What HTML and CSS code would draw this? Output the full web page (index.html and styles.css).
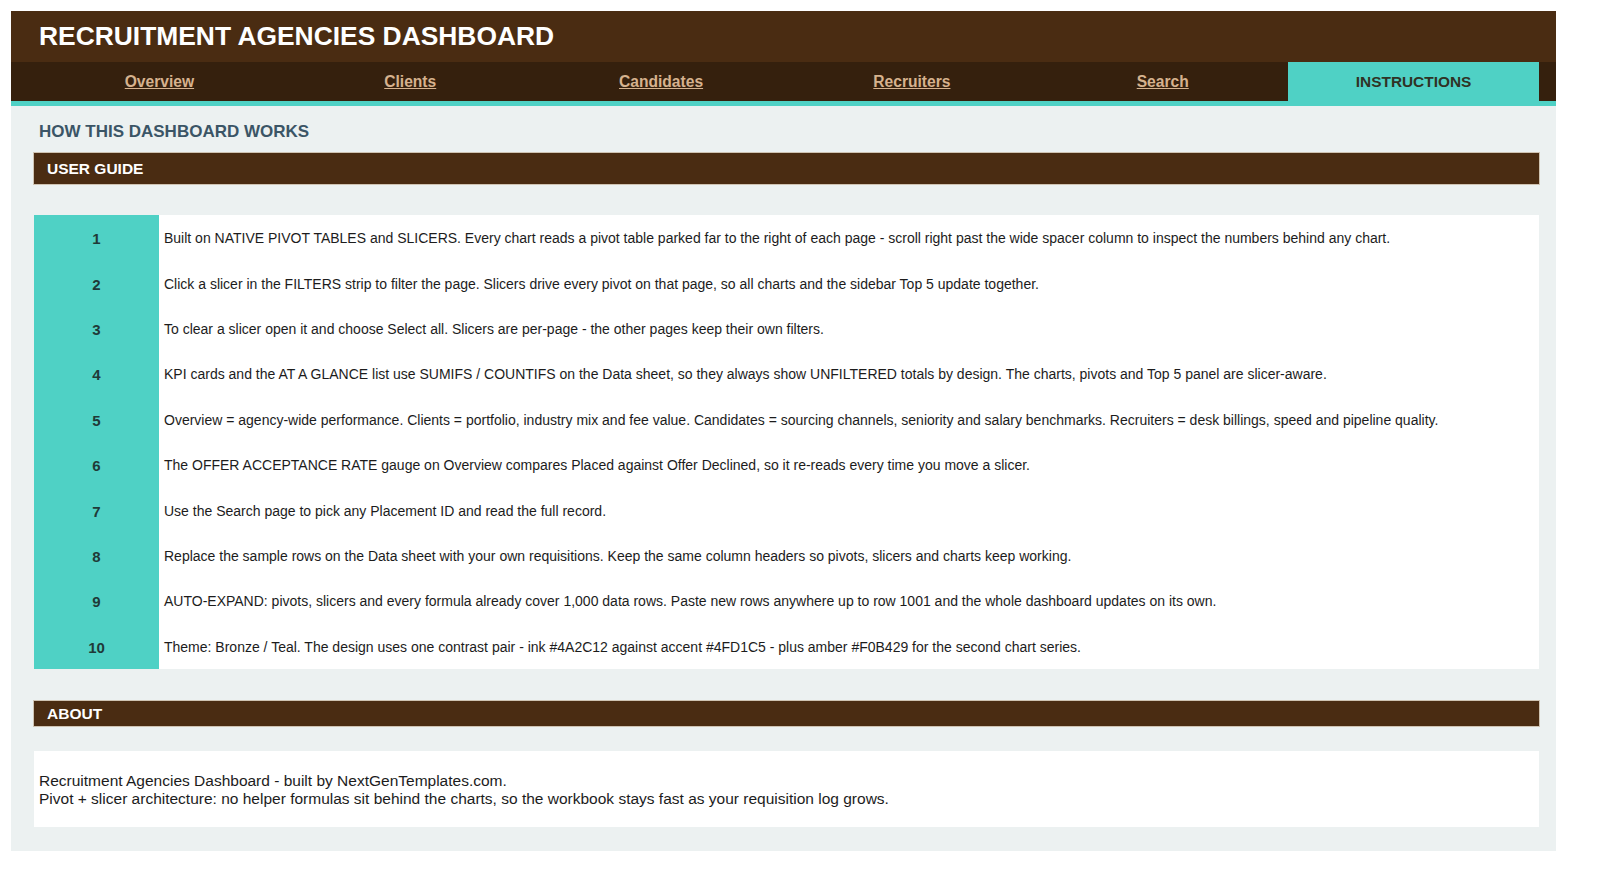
FILE: index.html
```html
<!DOCTYPE html>
<html>
<head>
<meta charset="utf-8">
<link rel="stylesheet" href="styles.css">
</head>
<body>
<div class="dash">
  <div class="title-bar">RECRUITMENT AGENCIES DASHBOARD</div>
  <div class="nav">
    <a class="tab">Overview</a>
    <a class="tab">Clients</a>
    <a class="tab">Candidates</a>
    <a class="tab">Recruiters</a>
    <a class="tab">Search</a>
    <a class="tab active">INSTRUCTIONS</a>
  </div>
  <div class="body">
    <div class="heading">HOW THIS DASHBOARD WORKS</div>
    <div class="section-bar guide-bar">USER GUIDE</div>
    <div class="guide">
      <div class="row"><div class="num">1</div><div class="txt">Built on NATIVE PIVOT TABLES and SLICERS. Every chart reads a pivot table parked far to the right of each page - scroll right past the wide spacer column to inspect the numbers behind any chart.</div></div>
      <div class="row"><div class="num">2</div><div class="txt">Click a slicer in the FILTERS strip to filter the page. Slicers drive every pivot on that page, so all charts and the sidebar Top 5 update together.</div></div>
      <div class="row"><div class="num">3</div><div class="txt">To clear a slicer open it and choose Select all. Slicers are per-page - the other pages keep their own filters.</div></div>
      <div class="row"><div class="num">4</div><div class="txt">KPI cards and the AT A GLANCE list use SUMIFS / COUNTIFS on the Data sheet, so they always show UNFILTERED totals by design. The charts, pivots and Top 5 panel are slicer-aware.</div></div>
      <div class="row"><div class="num">5</div><div class="txt">Overview = agency-wide performance. Clients = portfolio, industry mix and fee value. Candidates = sourcing channels, seniority and salary benchmarks. Recruiters = desk billings, speed and pipeline quality.</div></div>
      <div class="row"><div class="num">6</div><div class="txt">The OFFER ACCEPTANCE RATE gauge on Overview compares Placed against Offer Declined, so it re-reads every time you move a slicer.</div></div>
      <div class="row"><div class="num">7</div><div class="txt">Use the Search page to pick any Placement ID and read the full record.</div></div>
      <div class="row"><div class="num">8</div><div class="txt">Replace the sample rows on the Data sheet with your own requisitions. Keep the same column headers so pivots, slicers and charts keep working.</div></div>
      <div class="row"><div class="num">9</div><div class="txt">AUTO-EXPAND: pivots, slicers and every formula already cover 1,000 data rows. Paste new rows anywhere up to row 1001 and the whole dashboard updates on its own.</div></div>
      <div class="row"><div class="num">10</div><div class="txt">Theme: Bronze / Teal. The design uses one contrast pair - ink #4A2C12 against accent #4FD1C5 - plus amber #F0B429 for the second chart series.</div></div>
    </div>
    <div class="section-bar about-bar">ABOUT</div>
    <div class="about">
      <div>Recruitment Agencies Dashboard - built by NextGenTemplates.com.</div>
      <div>Pivot + slicer architecture: no helper formulas sit behind the charts, so the workbook stays fast as your requisition log grows.</div>
    </div>
  </div>
</div>
</body>
</html>
```
FILE: styles.css
```css
html, body {
  margin: 0;
  padding: 0;
  background: #ffffff;
  overflow: hidden;
}
body {
  font-family: "Liberation Sans", Arial, sans-serif;
}
.dash {
  margin: 11px 44px 0 11px;
}
.title-bar {
  background: #4A2C12;
  color: #ffffff;
  font-weight: bold;
  font-size: 26.4px;
  height: 51px;
  line-height: 51px;
  padding-left: 28px;
  box-sizing: border-box;
}
.nav {
  background: #35200D;
  display: flex;
  padding: 0 17px 0 23px;
  border-bottom: 5px solid #4FD1C5;
  box-sizing: border-box;
  height: 44px;
}
.tab {
  flex: 1;
  text-align: center;
  color: #D6B28E;
  font-weight: bold;
  font-size: 15.6px;
  text-decoration: underline;
  line-height: 40px;
}
.tab.active {
  background: #4FD1C5;
  color: #2F3325;
  font-size: 15.4px;
  text-decoration: none;
  margin-bottom: -5px;
  height: 44px;
}
.body {
  background: #ECF1F1;
  padding: 13px 17px 24px 23px;
}
.heading {
  color: #3B5566;
  font-weight: bold;
  font-size: 17px;
  padding-left: 5px;
  height: 34px;
  line-height: 26px;
}
.section-bar {
  background: #4A2C12;
  color: #ffffff;
  font-weight: bold;
  font-size: 15.5px;
  padding-left: 13px;
  box-shadow: 0 0 0 1px #cfc3b2;
}
.guide-bar {
  height: 31px;
  line-height: 32px;
}
.guide {
  margin-top: 31px;
  background: #ffffff;
}
.row {
  display: flex;
  height: 45.4px;
  align-items: center;
}
.num {
  width: 125px;
  flex: none;
  align-self: stretch;
  background: #4FD1C5;
  color: #1F3A38;
  font-weight: bold;
  font-size: 15px;
  display: flex;
  align-items: center;
  justify-content: center;
  padding-top: 2px;
  box-sizing: border-box;
}
.txt {
  padding-left: 5px;
  font-size: 14px;
  color: #1c1c1c;
  padding-top: 1px;
  white-space: nowrap;
}
.about-bar {
  margin-top: 32px;
  height: 25px;
  line-height: 26px;
}
.about {
  margin-top: 25px;
  background: #ffffff;
  height: 76px;
  box-sizing: border-box;
  padding: 21px 0 0 5px;
  font-size: 15.5px;
  color: #1c1c1c;
  line-height: 18px;
}
```
